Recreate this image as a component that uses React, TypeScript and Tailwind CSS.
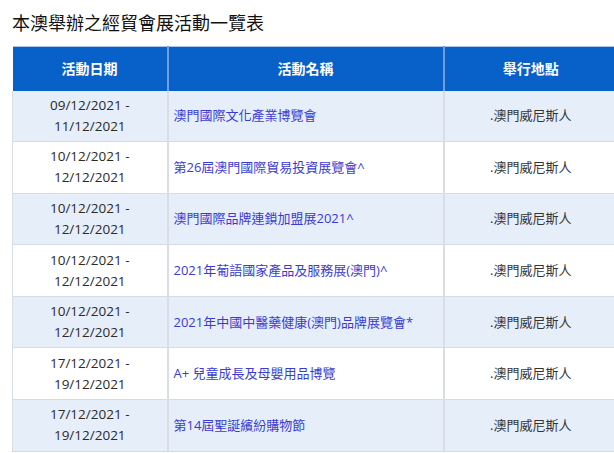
import React from "react";

const rows = [
  ["09/12/2021 -", "11/12/2021", "澳門國際文化產業博覽會"],
  ["10/12/2021 -", "12/12/2021", "第26屆澳門國際貿易投資展覽會^"],
  ["10/12/2021 -", "12/12/2021", "澳門國際品牌連鎖加盟展2021^"],
  ["10/12/2021 -", "12/12/2021", "2021年葡語國家產品及服務展(澳門)^"],
  ["10/12/2021 -", "12/12/2021", "2021年中國中醫藥健康(澳門)品牌展覽會*"],
  ["17/12/2021 -", "19/12/2021", "A+ 兒童成長及母嬰用品博覽"],
  ["17/12/2021 -", "19/12/2021", "第14屆聖誕繽紛購物節"],
];

export default function App() {
  return (
    <div
      className="w-[614px] h-[453px] overflow-hidden bg-white text-[#333]"
      style={{ fontFamily: '"Open Sans", "Noto Sans CJK TC", sans-serif' }}
    >
      <h1 className="pl-[12px] pt-[9px] pb-[9px] text-[18px] leading-[28px] font-normal text-[#111]">
        本澳舉辦之經貿會展活動一覽表
      </h1>
      <div className="pl-[12px]">
        <table className="w-[605px] border-collapse table-fixed">
          <colgroup>
            <col className="w-[155px]" />
            <col className="w-[276px]" />
            <col />
          </colgroup>
          <thead>
            <tr className="bg-[#0761c9] text-white border-t border-[#a9c5ea]">
              <th className="h-[44px] text-[14px] font-bold text-center border-r-2 border-[#6f9fe0]">活動日期</th>
              <th className="h-[44px] text-[14px] font-bold text-center border-r-2 border-[#6f9fe0]">活動名稱</th>
              <th className="h-[44px] text-[14px] font-bold text-center">舉行地點</th>
            </tr>
          </thead>
          <tbody>
            {rows.map((r, i) => (
              <tr
                key={i}
                className={`${i % 2 === 0 ? "bg-[#e6eef9]" : "bg-white"} border-b border-[#d6dce4]`}
              >
                <td className="py-[4.3px] text-[13.5px] leading-[21px] text-center text-[#2b2b2b] border-l border-r-2 border-[#d9dee5]">
                  <div>{r[0]}</div>
                  <div>{r[1]}</div>
                </td>
                <td className="px-[5px] text-[13px] leading-[21px] text-[#3b3bd2] border-r-2 border-[#d9dee5]">
                  {r[2]}
                </td>
                <td className="text-[13px] leading-[21px] text-center">.澳門威尼斯人</td>
              </tr>
            ))}
          </tbody>
        </table>
      </div>
    </div>
  );
}
